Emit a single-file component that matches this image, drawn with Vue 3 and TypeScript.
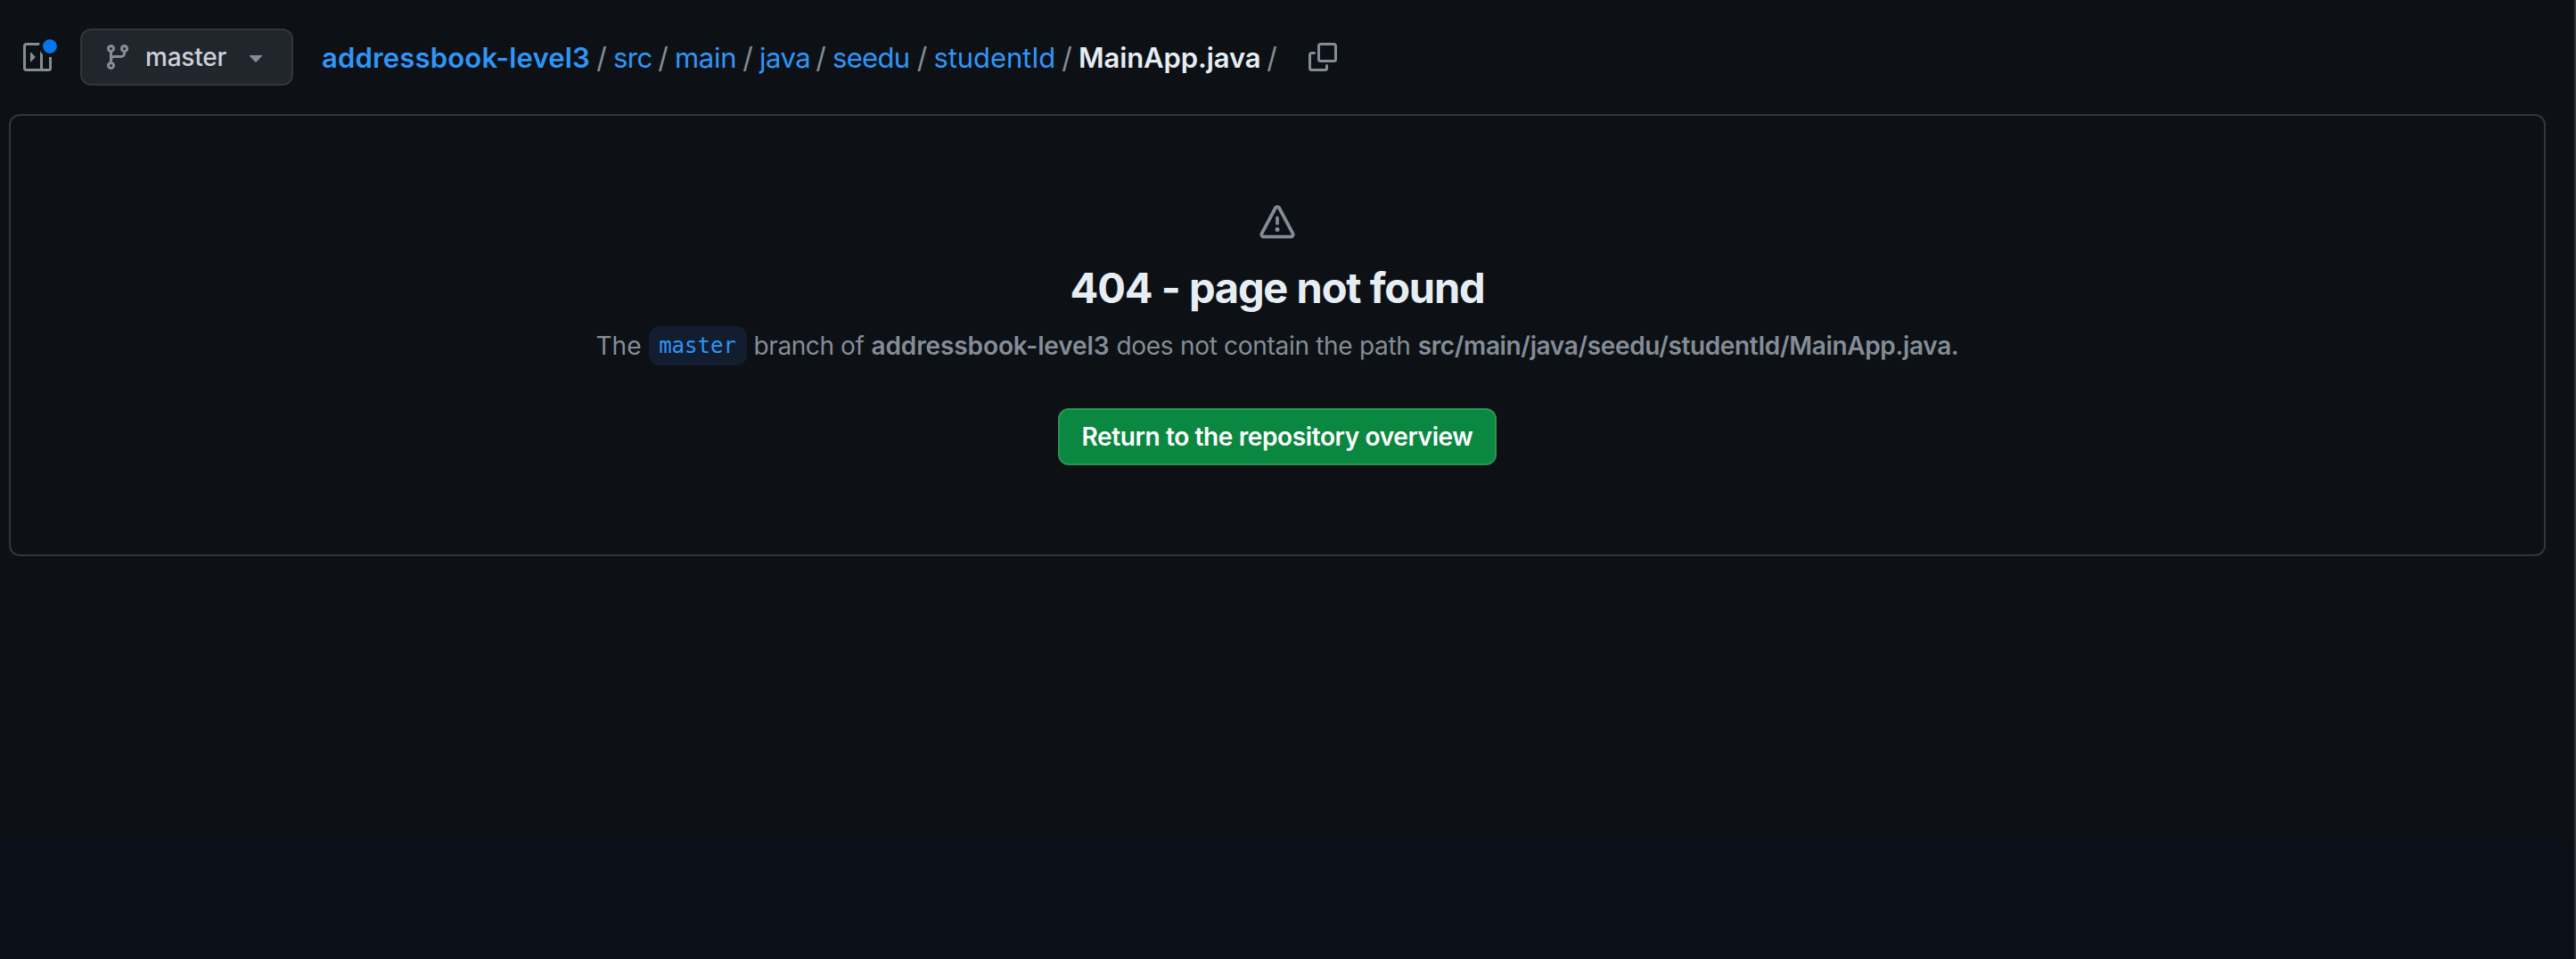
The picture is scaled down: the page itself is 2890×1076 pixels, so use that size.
<script setup lang="ts">
interface Crumb {
  label: string
  kind: 'repo' | 'dir' | 'file'
  width: number
  spacing: number
}

const branch = 'master'
const repo = 'addressbook-level3'
const path = 'src/main/java/seedu/studentId/MainApp.java'

const crumbs: Crumb[] = [
  { label: repo, kind: 'repo', width: 301, spacing: 0.18 },
  { label: 'src', kind: 'dir', width: 43, spacing: -0.5 },
  { label: 'main', kind: 'dir', width: 69, spacing: -0.3 },
  { label: 'java', kind: 'dir', width: 56, spacing: -0.5 },
  { label: 'seedu', kind: 'dir', width: 87.5, spacing: -0.7 },
  { label: 'studentId', kind: 'dir', width: 136.5, spacing: -0.1 },
  { label: 'MainApp.java', kind: 'file', width: 204, spacing: -0.1 },
]
</script>

<template>
  <div class="page">
    <header class="bar">
      <button class="tree-toggle" aria-label="Expand file tree">
        <svg width="32" height="32" viewBox="0 0 16 16" fill="currentColor">
          <path d="M6.823 7.823a.25.25 0 0 1 0 .354l-2.396 2.396A.25.25 0 0 1 4 10.396V5.604a.25.25 0 0 1 .427-.177Z" />
          <path d="M1.75 0h12.5C15.216 0 16 .784 16 1.75v12.5A1.75 1.75 0 0 1 14.25 16H1.75A1.75 1.75 0 0 1 0 14.25V1.75C0 .784.784 0 1.75 0ZM1.5 1.75v12.5c0 .138.112.25.25.25H9.5v-13H1.75a.25.25 0 0 0-.25.25ZM11 14.5h3.25a.25.25 0 0 0 .25-.25V1.75a.25.25 0 0 0-.25-.25H11Z" />
        </svg>
        <span class="dot"></span>
      </button>

      <button class="branch">
        <svg width="32" height="32" viewBox="0 0 16 16" fill="currentColor">
          <path d="M9.5 3.25a2.25 2.25 0 1 1 3 2.122V6A2.5 2.5 0 0 1 10 8.5H6a1 1 0 0 0-1 1v1.128a2.251 2.251 0 1 1-1.5 0V5.372a2.25 2.25 0 1 1 1.5 0v1.836A2.493 2.493 0 0 1 6 7h4a1 1 0 0 0 1-1v-.628A2.25 2.25 0 0 1 9.5 3.25Zm-6 0a.75.75 0 1 0 1.5 0 .75.75 0 0 0-1.5 0Zm8.25-.75a.75.75 0 1 0 0 1.5.75.75 0 0 0 0-1.5ZM4.25 12a.75.75 0 1 0 0 1.5.75.75 0 0 0 0-1.5Z" />
        </svg>
        <span class="branch-name">{{ branch }}</span>
        <svg class="caret" width="32" height="32" viewBox="0 0 16 16" fill="currentColor">
          <path d="m4.427 7.427 3.396 3.396a.25.25 0 0 0 .354 0l3.396-3.396A.25.25 0 0 0 11.396 7H4.604a.25.25 0 0 0-.177.427Z" />
        </svg>
      </button>

      <nav class="crumbs">
        <template v-for="c in crumbs" :key="c.label">
          <a :class="['crumb', c.kind]" :style="{ width: c.width + 'px', letterSpacing: c.spacing + 'px' }">{{ c.label }}</a>
          <span class="sep">/</span>
        </template>
      </nav>

      <button class="copy" aria-label="Copy path">
        <svg width="32" height="32" viewBox="0 0 16 16" fill="currentColor">
          <path d="M0 6.75C0 5.784.784 5 1.75 5h1.5a.75.75 0 0 1 0 1.5h-1.5a.25.25 0 0 0-.25.25v7.5c0 .138.112.25.25.25h7.5a.25.25 0 0 0 .25-.25v-1.5a.75.75 0 0 1 1.5 0v1.5A1.75 1.75 0 0 1 9.25 16h-7.5A1.75 1.75 0 0 1 0 14.25Z" />
          <path d="M5 1.75C5 .784 5.784 0 6.75 0h7.5C15.216 0 16 .784 16 1.75v7.5A1.75 1.75 0 0 1 14.25 11h-7.5A1.75 1.75 0 0 1 5 9.25Zm1.75-.25a.25.25 0 0 0-.25.25v7.5c0 .138.112.25.25.25h7.5a.25.25 0 0 0 .25-.25v-7.5a.25.25 0 0 0-.25-.25Z" />
        </svg>
      </button>
    </header>

    <main class="card">
      <svg class="alert" width="40" height="40" viewBox="0 0 16 16" fill="currentColor">
        <path d="M6.457 1.047c.659-1.234 2.427-1.234 3.086 0l6.082 11.378A1.75 1.75 0 0 1 14.082 15H1.918a1.75 1.75 0 0 1-1.543-2.575Zm1.763.707a.25.25 0 0 0-.44 0L1.698 13.132a.25.25 0 0 0 .22.368h12.164a.25.25 0 0 0 .22-.368Zm.53 3.996v2.5a.75.75 0 0 1-1.5 0v-2.5a.75.75 0 0 1 1.5 0ZM9 11a1 1 0 1 1-2 0 1 1 0 0 1 2 0Z" />
      </svg>
      <h1>404 - page not found</h1>
      <p>
        <span class="t-the">The</span>
        <code>{{ branch }}</code>
        <span class="t-branch">branch of</span>
        <strong class="t-repo">{{ repo }}</strong>
        <span class="t-not">does not contain the path</span>
        <strong class="t-path">{{ path }}.</strong>
      </p>
      <a class="cta">Return to the repository overview</a>
    </main>
  </div>
</template>

<style>
body {
  margin: 0;
  background: #0d1117;
}
</style>

<style scoped>
.page {
  box-sizing: border-box;
  width: 2890px;
  height: 1076px;
  padding: 32px 32px 0 10px;
  border-right: 2px solid #363636;
  overflow: hidden;
  background: linear-gradient(#0d1116 942px, #0b1018 942px);
  color: #848d97;
  font-family: Inter, "Liberation Sans", sans-serif;
  font-size: 28px;
}
button {
  padding: 0;
  border: 0;
  background: none;
  color: inherit;
  font: inherit;
}
svg {
  display: block;
  flex: none;
}
.bar {
  display: flex;
  align-items: center;
  height: 64px;
  padding-left: 16px;
}
.tree-toggle {
  position: relative;
  width: 32px;
  height: 32px;
}
.dot {
  position: absolute;
  top: -8px;
  left: 18px;
  width: 16px;
  height: 16px;
  border: 4px solid #0d1116;
  border-radius: 50%;
  background: #0576ea;
  background-clip: padding-box;
}
.branch {
  box-sizing: border-box;
  display: flex;
  align-items: center;
  width: 239px;
  height: 64px;
  margin-left: 32px;
  padding-left: 24px;
  border: 2px solid #30363b;
  border-radius: 12px;
  background: #21262d;
}
.branch-name {
  width: 93px;
  margin-left: 15px;
  color: #c9d1d9;
  font-weight: 500;
  letter-spacing: -0.2px;
  white-space: nowrap;
  text-align: left;
}
.caret {
  margin-left: 15px;
}
.crumbs {
  display: flex;
  align-items: center;
  margin-left: 32px;
  padding-top: 2px;
  font-size: 31px;
  line-height: 48px;
  white-space: nowrap;
}
.crumb {
  color: #2f96f8;
}
.repo,
.file {
  font-weight: 600;
}
.file {
  color: #e6edf3;
}
.sep {
  width: 26px;
  font-size: 32px;
  text-align: center;
}
.copy {
  margin-left: 28px;
}
.card {
  box-sizing: border-box;
  display: flex;
  flex-direction: column;
  align-items: center;
  width: 2846px;
  height: 496px;
  margin-top: 32px;
  padding-top: 100px;
  border: 2px solid #30363b;
  border-radius: 12px;
}
h1 {
  margin: 17px 0 0;
  color: #e6edf3;
  font-size: 47px;
  font-weight: 700;
  letter-spacing: -1.2px;
  word-spacing: 0.5px;
  line-height: 72px;
  white-space: nowrap;
}
p {
  display: flex;
  align-items: center;
  height: 44px;
  margin: 7px 0 0;
  line-height: 44px;
  white-space: nowrap;
}
code {
  box-sizing: border-box;
  width: 110px;
  height: 44px;
  margin: 0 8px;
  border-radius: 12px;
  background: #121d2f;
  color: #2f96f8;
  font-family: "DejaVu Sans Mono", monospace;
  font-size: 24px;
  text-align: center;
}
.t-branch {
  letter-spacing: -0.4px;
}
.t-repo {
  margin: 0 8px;
  letter-spacing: -0.1px;
}
.t-not {
  letter-spacing: -0.3px;
}
.t-path {
  margin-left: 8px;
  letter-spacing: -0.35px;
}
strong {
  font-weight: 600;
}
.cta {
  box-sizing: border-box;
  width: 492px;
  height: 64px;
  margin-top: 48px;
  border: 2px solid #2e934e;
  border-radius: 12px;
  background: #0a8740;
  color: #fff;
  font-weight: 600;
  letter-spacing: -0.38px;
  line-height: 60px;
  text-align: center;
  white-space: nowrap;
}
</style>
